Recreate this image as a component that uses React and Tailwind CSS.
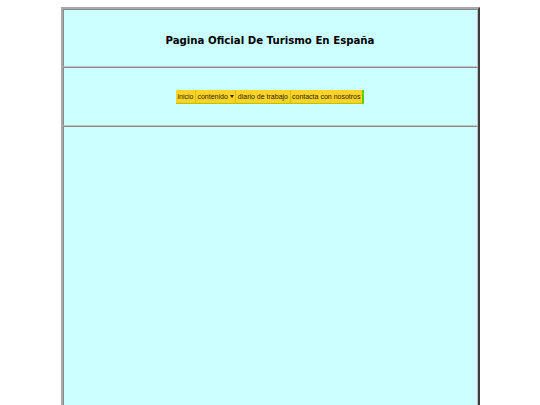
export default function App() {
  return (
    <div className="h-[405px] overflow-hidden bg-white pt-[7px]">
      <div className="mx-auto w-[419px] border-2 border-t-[#a8a8a8] border-l-[#a8a8a8] border-r-[#3c3c3c] border-b-[#3c3c3c] bg-[#ccffff]">
        <div className="flex h-[58px] items-center justify-center border border-t-[#8a8a8a] border-l-[#8a8a8a] border-r-[#c4c4c4] border-b-[#c4c4c4]">
          <h1 className="pt-[5px] text-[10.2px] font-bold text-black" style={{ fontFamily: '"DejaVu Sans", Verdana, sans-serif' }}>
            Pagina Oficial De Turismo En España
          </h1>
        </div>
        <div className="flex h-[59px] items-center justify-center border border-t-[#8a8a8a] border-l-[#8a8a8a] border-r-[#c4c4c4] border-b-[#c4c4c4]">
          <div
            className="flex h-[14px] items-stretch border-r-2 border-b border-r-[#66cc00] border-b-[#b8c400] bg-[#ffd324] text-[7px] leading-[13px] text-[#222]"
            style={{ fontFamily: '"Liberation Sans", Arial, sans-serif' }}
          >
            <span className="border-r border-[#d8c200] px-[1.5px]">inicio</span>
            <span className="flex items-center gap-[2px] border-r border-[#d8c200] px-[1.5px]">
              contenido
              <svg width="4" height="3" viewBox="0 0 4 3"><path d="M0 0H4L2 3Z" fill="#222" /></svg>
            </span>
            <span className="border-r border-[#d8c200] px-[1.5px]">diario de trabajo</span>
            <span className="px-[1.5px]">contacta con nosotros</span>
          </div>
        </div>
        <div className="h-[300px] border border-t-[#8a8a8a] border-l-[#8a8a8a] border-r-[#c4c4c4] border-b-[#c4c4c4]"></div>
      </div>
    </div>
  );
}
